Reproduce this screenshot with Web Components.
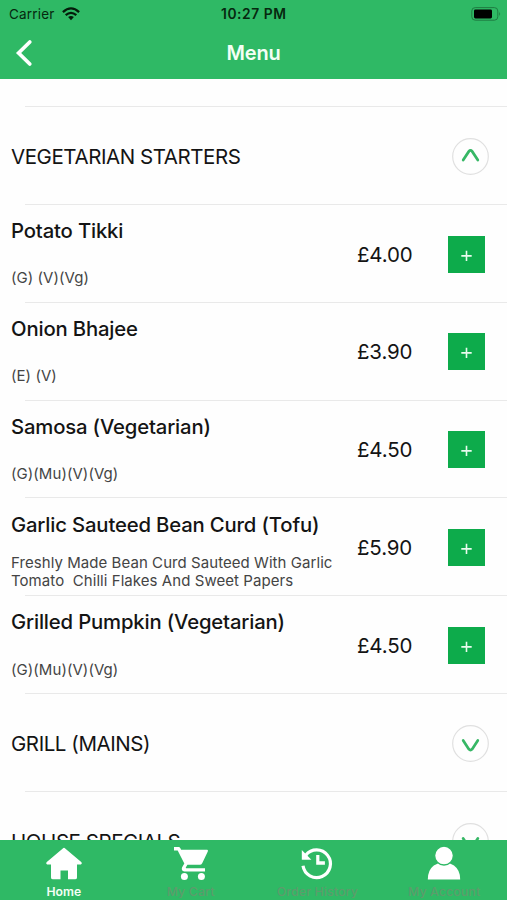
<!DOCTYPE html>
<html lang="en">
<head>
<meta charset="utf-8">
<title>Menu</title>
<style>
  html, body {
    margin: 0;
    height: 100%;
    overflow: hidden;
    background: #fefefe;
    font-family: Inter, "Liberation Sans", sans-serif;
  }
</style>
</head>
<body>
<menu-screen>
  <app-header slot="header" time="10:27 PM" carrier="Carrier">Menu</app-header>
  <menu-section open>VEGETARIAN STARTERS</menu-section>
  <menu-item price="£4.00">Potato Tikki<span slot="info">(G) (V)(Vg)</span></menu-item>
  <menu-item price="£3.90">Onion Bhajee<span slot="info">(E) (V)</span></menu-item>
  <menu-item price="£4.50">Samosa (Vegetarian)<span slot="info">(G)(Mu)(V)(Vg)</span></menu-item>
  <menu-item price="£5.90">Garlic Sauteed Bean Curd (Tofu)<span slot="info">Freshly Made Bean Curd Sauteed With Garlic
Tomato  Chilli Flakes And Sweet Papers</span></menu-item>
  <menu-item price="£4.50">Grilled Pumpkin (Vegetarian)<span slot="info">(G)(Mu)(V)(Vg)</span></menu-item>
  <menu-section>GRILL (MAINS)</menu-section>
  <menu-section>HOUSE SPECIALS</menu-section>
  <tab-bar slot="tabs">
    <tab-item icon="home" active>Home</tab-item>
    <tab-item icon="cart">My Cart</tab-item>
    <tab-item icon="history">Order History</tab-item>
    <tab-item icon="account">My Account</tab-item>
  </tab-bar>
</menu-screen>

<script>
class MenuScreen extends HTMLElement {
  constructor() {
    super();
    this.attachShadow({ mode: 'open' });
    this.shadowRoot.innerHTML = `
      <style>
        :host {
          display: flex;
          flex-direction: column;
          height: 100vh;
        }
        .list {
          flex: 1;
          min-height: 0;
          overflow: hidden;
        }
        .previous {
          height: 27px;
          margin-left: 25px;
          border-bottom: 1px solid #e9e9e9;
        }
      </style>
      <slot name="header"></slot>
      <div class="list">
        <div class="previous"></div>
        <slot></slot>
      </div>
      <slot name="tabs"></slot>
    `;
  }
}

class AppHeader extends HTMLElement {
  constructor() {
    super();
    this.attachShadow({ mode: 'open' });
    this.shadowRoot.innerHTML = `
      <style>
        :host {
          display: block;
          height: 79px;
          flex: none;
          background: #2fb965;
        }
        .row {
          display: grid;
          grid-template-columns: 1fr auto 1fr;
          align-items: center;
        }
        .status {
          height: 27px;
          color: #06280f;
          font-size: 13.5px;
        }
        .left {
          display: flex;
          align-items: center;
          gap: 7px;
          padding-left: 9px;
          letter-spacing: 0.2px;
        }
        .time {
          font-weight: 600;
          font-size: 13.8px;
          letter-spacing: 0.55px;
          margin-right: -0.55px;
        }
        .battery {
          justify-self: end;
          padding-right: 6px;
        }
        .nav {
          height: 52px;
          color: #f4fff5;
        }
        .title {
          font-size: 20px;
          font-weight: 600;
          letter-spacing: -0.2px;
        }
        .back {
          padding-left: 15px;
        }
        svg {
          display: block;
        }
      </style>
      <div class="row status">
        <div class="left">
          <span>${this.getAttribute('carrier')}</span>
          <svg width="18" height="14" viewBox="0 0 18 14" fill="none" stroke="#041c0a" stroke-width="2.3">
            <path d="M.9 5.1Q9-2.3 17.1 5.1"/>
            <path d="M3.7 8.2Q9 3.5 14.3 8.2"/>
            <path d="M6.1 10.1Q9 7.7 11.9 10.1L9 13.3z" fill="#041c0a" stroke="none"/>
          </svg>
        </div>
        <div class="time">${this.getAttribute('time')}</div>
        <svg class="battery" width="30" height="14" viewBox="0 0 30 14">
          <rect x=".8" y=".6" width="26" height="12.6" rx="3.4" fill="none" stroke="#1f7c42"/>
          <rect x="3" y="2.4" width="18" height="9" rx="1.4" fill="#000"/>
          <path d="M28.2 4.8q1.8 2 0 4.2z" fill="#1f7c42"/>
        </svg>
      </div>
      <div class="row nav">
        <svg class="back" width="18" height="28" viewBox="0 0 18 28" fill="none" stroke="#fff" stroke-width="3.7" stroke-linecap="round">
          <path d="M14.8 3L3.6 14L14.8 25"/>
        </svg>
        <div class="title"><slot></slot></div>
      </div>
    `;
  }
}

class MenuSection extends HTMLElement {
  constructor() {
    super();
    this.attachShadow({ mode: 'open' });
    const arrow = this.hasAttribute('open')
      ? 'M11.5 22.7L17.3 13.8Q19 11.8 20.7 13.8L26.5 22.7'
      : 'M11.5 15.9L17.3 24.8Q19 26.8 20.7 24.8L26.5 15.9';
    this.shadowRoot.innerHTML = `
      <style>
        :host {
          display: flex;
          flex-direction: column;
          height: 97.85px;
          color: #141414;
        }
        .body {
          flex: 1;
          display: flex;
          align-items: center;
          justify-content: space-between;
          padding: 2px 18px 0 11px;
        }
        .name {
          font-size: 20.5px;
          letter-spacing: -0.43px;
        }
        .line {
          flex: none;
          height: 1px;
          margin-left: 25px;
          background: #e9e9e9;
        }
      </style>
      <div class="body">
        <div class="name"><slot></slot></div>
        <svg width="37" height="37" viewBox="0 0 38 38" fill="none">
          <circle cx="19" cy="19" r="18.3" stroke="#e0e0e0" stroke-width="1.2"/>
          <path d="${arrow}" stroke="#36b765" stroke-width="2.8" stroke-linecap="round"/>
        </svg>
      </div>
      <div class="line"></div>
    `;
  }
}

class MenuItem extends HTMLElement {
  constructor() {
    super();
    this.attachShadow({ mode: 'open' });
    this.shadowRoot.innerHTML = `
      <style>
        :host {
          display: flex;
          flex-direction: column;
          height: 97.85px;
          color: #141414;
        }
        .body {
          flex: 1;
          display: grid;
          grid-template-columns: 346px 1fr 37px;
          align-items: center;
          padding: 1.6px 22px 0 11px;
        }
        .text {
          display: grid;
          grid-template-rows: 48px 47px;
          align-items: center;
        }
        .name {
          font-size: 20.3px;
          font-weight: 500;
          letter-spacing: -0.16px;
        }
        .info {
          padding-top: 1px;
          font-size: 15px;
          line-height: 18.5px;
          white-space: pre;
          color: #444;
          letter-spacing: 0.06px;
        }
        .price {
          font-size: 20.5px;
          letter-spacing: -0.15px;
        }
        .add {
          display: grid;
          width: 37px;
          height: 37px;
          background: #0dab4b;
        }
        .line {
          flex: none;
          height: 1px;
          margin-left: 25px;
          background: #e9e9e9;
        }
      </style>
      <div class="body">
        <div class="text">
          <div class="name"><slot></slot></div>
          <div class="info"><slot name="info"></slot></div>
        </div>
        <div class="price">${this.getAttribute('price')}</div>
        <div class="add">
          <svg width="37" height="37" viewBox="0 0 37 37" stroke="#e9fbee" stroke-width="1.6">
            <path d="M13.3 19.9h10.4M18.5 14.7v10.4"/>
          </svg>
        </div>
      </div>
      <div class="line"></div>
    `;
  }
}

class TabBar extends HTMLElement {
  constructor() {
    super();
    this.attachShadow({ mode: 'open' });
    this.shadowRoot.innerHTML = `
      <style>
        :host {
          display: grid;
          grid-template-columns: repeat(4, 1fr);
          flex: none;
          height: 60px;
          background: #2fb965;
        }
      </style>
      <slot></slot>
    `;
  }
}

const ICONS = {
  home: `
    <path d="M20 2.8Q20.6 2.8 21.2 3.4L37.5 17.2Q38.4 18.8 36.8 19.6H33V32.4Q33 34.3 31 34.3H24V25.6H16.5V34.3H9Q7 34.3 7 32.4V19.6H3.2Q1.6 18.8 2.5 17.2L18.8 3.4Q19.4 2.8 20 2.8z"/>`,
  cart: `
    <path d="M3 2H7.4Q8.8 2 9.4 3.2L10.1 4.8H36.2Q37.4 5.2 36.8 6.4L31.2 18.2Q30.4 19.8 28.8 19.8H16.4L14.8 22.6Q14.6 23.2 15.2 23.2H34V26.4H13.4Q10 26 11 22.6L13.3 18.4L6.7 5.4H3z"/>
    <circle cx="13.4" cy="31.4" r="3.5"/>
    <circle cx="30.4" cy="31.4" r="3.5"/>`,
  history: `
    <path d="M8.8 10.2A13.8 13.8 0 1 1 6 20.8" fill="none" stroke="#fff" stroke-width="3.2"/>
    <path d="M4.8 4.9V14.7H14.4z"/>
    <path d="M19.2 9.9h3.2v6.4h5.5v3.5h-8.7z"/>`,
  account: `
    <path d="M3.8 34.4Q3.8 25 9.8 20.5Q20 13.4 30 20.5Q36.2 25 36.2 34.4z"/>
    <circle cx="20" cy="10.6" r="9.4" stroke="#2fb965" stroke-width="1.3"/>`
};

class TabItem extends HTMLElement {
  constructor() {
    super();
    this.attachShadow({ mode: 'open' });
    this.shadowRoot.innerHTML = `
      <style>
        :host {
          display: flex;
          flex-direction: column;
          align-items: center;
          padding: 5px 0 0 1px;
          color: #5c9c6c;
          font-size: 12.2px;
          font-weight: 500;
          line-height: 16px;
          letter-spacing: 0.2px;
          white-space: nowrap;
        }
        :host([active]) {
          color: #f4fff5;
          font-weight: 600;
          letter-spacing: 0;
        }
        svg {
          display: block;
          margin-bottom: 1px;
        }
      </style>
      <svg width="40" height="38" viewBox="0 0 40 38" fill="#fff">${ICONS[this.getAttribute('icon')]}</svg>
      <slot></slot>
    `;
  }
}

customElements.define('menu-screen', MenuScreen);
customElements.define('app-header', AppHeader);
customElements.define('menu-section', MenuSection);
customElements.define('menu-item', MenuItem);
customElements.define('tab-bar', TabBar);
customElements.define('tab-item', TabItem);
</script>
</body>
</html>
